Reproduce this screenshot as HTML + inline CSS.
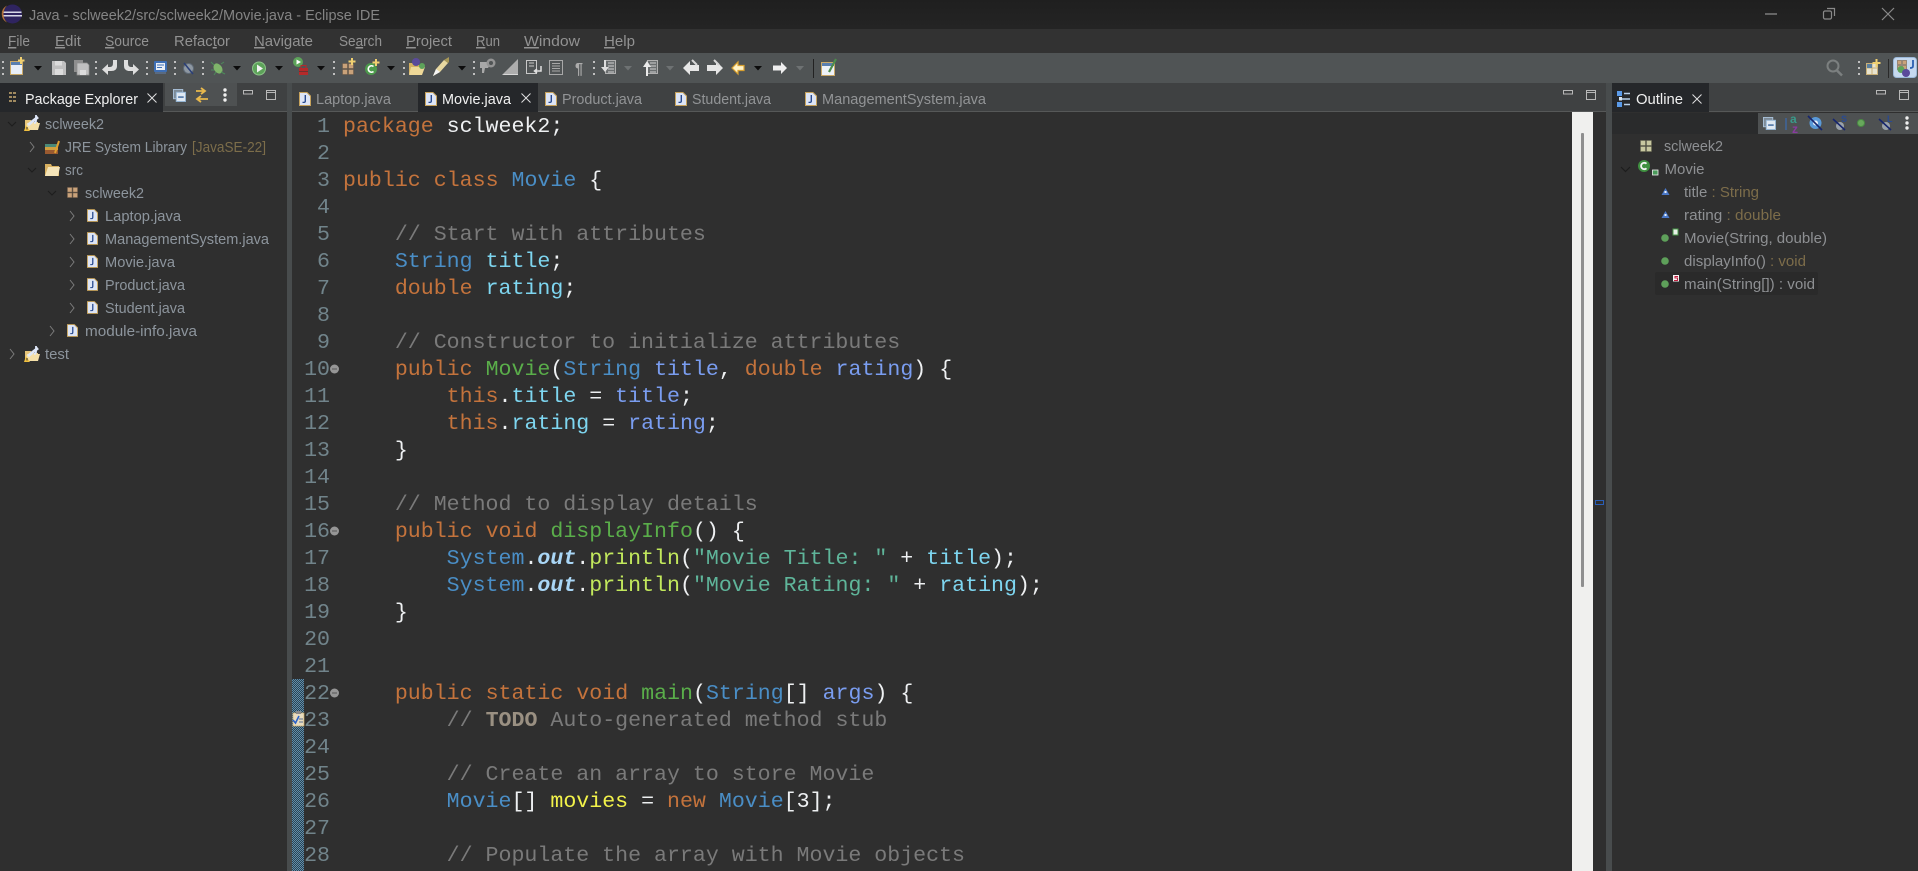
<!DOCTYPE html>
<html><head><meta charset="utf-8"><title>Java - sclweek2/src/sclweek2/Movie.java - Eclipse IDE</title>
<style>
html,body{margin:0;padding:0;width:1918px;height:871px;overflow:hidden;background:#2f2f2f}
svg{position:absolute;left:0;top:0}
svg text{font-family:"Liberation Sans",sans-serif;font-size:15px}
pre{position:absolute;margin:0;font-family:"Liberation Mono",monospace;font-size:21.6px;line-height:27px;color:#eee}
#nums{left:300px;top:114px;width:30px;text-align:right;color:#71848b}
#code{left:343px;top:114px;color:#eef0f2}
.k{color:#c4733c}.c{color:#7a7a7a}.t{color:#4a8ec6}.f{color:#7ed6f0}.p{color:#7a9df0}.m{color:#5aae4a}.l{color:#c2e85c}.s{color:#5fb59a}.o{color:#a9d6f6;font-weight:bold;font-style:italic}.d{color:#9a9082;font-weight:bold}.y{color:#f2f24a}
</style></head><body>
<svg width="1918" height="871" viewBox="0 0 1918 871" xmlns="http://www.w3.org/2000/svg">
<defs>
<pattern id="dots" width="2" height="2" patternUnits="userSpaceOnUse"><rect width="2" height="2" fill="#2c4252"/><rect width="1" height="1" fill="#5f8eab"/><rect x="1" y="1" width="1" height="1" fill="#5f8eab"/></pattern>
<linearGradient id="tb" x1="0" y1="0" x2="0" y2="1"><stop offset="0" stop-color="#1f1f1f"/><stop offset="1" stop-color="#242424"/></linearGradient>
<symbol id="file" viewBox="0 0 12 14" overflow="visible"><path d="M.5.5H8L11.500 4V13.500H.5Z" fill="#dde5f6" stroke="#c6a25c"/><path d="M7 3V9Q7 11 5 11H3.500V9.800H5Q5.600 9.800 5.600 9V3Z" fill="#27498f"/></symbol>
<symbol id="proj" viewBox="0 0 17 18" overflow="visible"><path d="M1 6H7L8 8H14V16H1Z" fill="#e6c478"/><path d="M3 9H16L14 16H1Z" fill="#f4dfa8"/><path d="M4 11L14 3" stroke="#dfe6f5" stroke-width="3"/><path d="M12 1V7Q12 9 10 9" stroke="#dfe8fa" stroke-width="1.800" fill="none"/><path d="M2 11L6 17H0Z" fill="#f0c040"/><rect x="2.500" y="13" width="1" height="2.500" fill="#333"/></symbol>
<symbol id="pkg" viewBox="0 0 12 12" overflow="visible"><g fill="#c9a27a" stroke="#6d5a48" stroke-width=".6"><rect x=".5" y=".5" width="5" height="5"/><rect x="6.500" y=".5" width="5" height="5"/><rect x=".5" y="6.500" width="5" height="5"/><rect x="6.500" y="6.500" width="5" height="5"/></g></symbol>
<symbol id="grip" viewBox="0 0 2 14" overflow="visible"><g fill="#c0c0c0"><rect width="2" height="2"/><rect y="6" width="2" height="2"/><rect y="12" width="2" height="2"/></g></symbol>
<symbol id="dots3" viewBox="0 0 4 14" overflow="visible"><g fill="#f0f0f0"><circle cx="2" cy="2" r="1.700"/><circle cx="2" cy="7" r="1.700"/><circle cx="2" cy="12" r="1.700"/></g></symbol>
<symbol id="collapse" viewBox="0 0 14 14" overflow="visible"><rect x=".5" y=".5" width="10" height="10" fill="#7d8a96" stroke="#a8c0d8"/><rect x="3.500" y="3.500" width="10" height="10" fill="#dfe8f2" stroke="#8fb0d0"/><rect x="5.500" y="8" width="6" height="1.400" fill="#2b5a94"/></symbol>
<symbol id="crossball" viewBox="0 0 14 14" overflow="visible"><circle cx="8" cy="9" r="4" fill="#9aa2aa"/><path d="M1 2L13 13" stroke="#15256e" stroke-width="1.600"/></symbol>
</defs>

<!-- base -->
<rect width="1918" height="871" fill="#2f2f2f"/>
<rect width="1918" height="29" fill="url(#tb)"/>
<rect y="29" width="1918" height="24" fill="#323232"/>
<rect y="53" width="1918" height="30" fill="#505455"/>
<!-- sashes -->
<rect x="287" y="83" width="5" height="788" fill="#484c4d"/>
<rect x="1606" y="83" width="6" height="788" fill="#484c4d"/>
<!-- tab strips -->
<rect y="83" width="287" height="29" fill="#3f4142"/>
<rect x="292" y="83" width="1314" height="29" fill="#3f4142"/>
<rect x="1612" y="83" width="306" height="29" fill="#3f4142"/>
<rect y="111" width="287" height="1" fill="#565858"/>
<rect x="292" y="111" width="1314" height="1" fill="#565858"/>
<rect x="1612" y="111" width="306" height="1" fill="#565858"/>
<rect y="83" width="163" height="29" fill="#25272a"/>
<rect x="165" y="83" width="72" height="23" fill="#4e5152"/>
<rect x="418" y="83" width="120" height="29" fill="#25272a"/>
<rect x="1612" y="83" width="97" height="29" fill="#25272a"/>
<rect x="1612" y="113" width="146" height="21" fill="#2a2b2c"/>
<rect x="1758" y="113" width="160" height="21" fill="#4e5152"/>
<!-- editor scrollbar -->
<rect x="1572" y="112" width="21" height="759" fill="#f0f0ee"/>
<rect x="1581" y="133" width="3" height="454" rx="1" fill="#8f8f8f"/>
<rect x="1595.500" y="500.500" width="8" height="4" fill="none" stroke="#2a5fb8"/>
<!-- change marker -->
<rect x="292" y="679" width="12" height="192" fill="url(#dots)"/>

<!-- title bar -->
<circle cx="12.500" cy="14" r="9.500" fill="#2f2460"/>
<path d="M3.500 11.500H21.500V13H3.500ZM3 15H22V16.500H3Z" fill="#d8d8e8"/>
<path d="M7 5.500A9.500 9.500 0 0 0 7 22.500A12 12 0 0 1 7 5.500Z" fill="#b0703a"/>
<text x="29" y="20" fill="#848484" textLength="351" lengthAdjust="spacingAndGlyphs">Java - sclweek2/src/sclweek2/Movie.java - Eclipse IDE</text>
<path d="M1765 14H1777" stroke="#8a8a8a" stroke-width="1.300"/>
<path d="M1827 8.500H1834.500V16" fill="none" stroke="#8a8a8a" stroke-width="1.200"/><rect x="1823.500" y="11" width="8" height="8" rx="1.500" fill="none" stroke="#8a8a8a" stroke-width="1.200"/>
<path d="M1882 8L1894 20M1894 8L1882 20" stroke="#8a8a8a" stroke-width="1.200"/>

<!-- menu -->
<g fill="#929292">
<text x="8" y="46" textLength="22" lengthAdjust="spacingAndGlyphs"><tspan style="text-decoration:underline">F</tspan>ile</text>
<text x="55" y="46" textLength="26" lengthAdjust="spacingAndGlyphs"><tspan style="text-decoration:underline">E</tspan>dit</text>
<text x="105" y="46" textLength="44" lengthAdjust="spacingAndGlyphs"><tspan style="text-decoration:underline">S</tspan>ource</text>
<text x="174" y="46" textLength="56" lengthAdjust="spacingAndGlyphs">Refac<tspan style="text-decoration:underline">t</tspan>or</text>
<text x="254" y="46" textLength="59" lengthAdjust="spacingAndGlyphs"><tspan style="text-decoration:underline">N</tspan>avigate</text>
<text x="339" y="46" textLength="43" lengthAdjust="spacingAndGlyphs">Se<tspan style="text-decoration:underline">a</tspan>rch</text>
<text x="406" y="46" textLength="46" lengthAdjust="spacingAndGlyphs"><tspan style="text-decoration:underline">P</tspan>roject</text>
<text x="476" y="46" textLength="24" lengthAdjust="spacingAndGlyphs"><tspan style="text-decoration:underline">R</tspan>un</text>
<text x="524" y="46" textLength="56" lengthAdjust="spacingAndGlyphs"><tspan style="text-decoration:underline">W</tspan>indow</text>
<text x="604" y="46" textLength="31" lengthAdjust="spacingAndGlyphs"><tspan style="text-decoration:underline">H</tspan>elp</text>
</g>

<!-- toolbar grips -->
<use href="#grip" x="2" y="61" width="2" height="14"/><use href="#grip" x="95" y="61" width="2" height="14"/><use href="#grip" x="146" y="61" width="2" height="14"/><use href="#grip" x="174" y="61" width="2" height="14"/><use href="#grip" x="202" y="61" width="2" height="14"/><use href="#grip" x="333" y="61" width="2" height="14"/><use href="#grip" x="403" y="61" width="2" height="14"/><use href="#grip" x="473" y="61" width="2" height="14"/><use href="#grip" x="593" y="61" width="2" height="14"/>
<rect x="813" y="59" width="1" height="19" fill="#222"/>
<!-- dropdown arrows -->
<g fill="#0c0c0c"><path d="M34 66H42L38 70.500Z"/><path d="M233 66H241L237 70.500Z"/><path d="M275 66H283L279 70.500Z"/><path d="M317 66H325L321 70.500Z"/><path d="M387 66H395L391 70.500Z"/><path d="M458 66H466L462 70.500Z"/><path d="M754 66H762L758 70.500Z"/></g>
<g fill="#6e7273"><path d="M624 66H632L628 70.500Z"/><path d="M666 66H674L670 70.500Z"/><path d="M796 66H804L800 70.500Z"/></g>
<!-- new -->
<rect x="10.500" y="61.500" width="12" height="13" fill="#e8eef8" stroke="#c9a868"/><rect x="11" y="62" width="11" height="3" fill="#5a7fb0"/><path d="M21 57V64M18 60.500H24.500" stroke="#f0d070" stroke-width="2"/>
<!-- save -->
<path d="M52 61H64L66 63V75H52Z" fill="#c0c0c0"/><rect x="55" y="61" width="7" height="4.500" fill="#dcdcdc"/><rect x="55" y="69" width="8" height="6" fill="#dcdcdc"/>
<path d="M74 60H83V72H74Z" fill="#8e8e8e"/><path d="M77 63H87L89 65V75H77Z" fill="#c0c0c0" stroke="#8e8e8e" stroke-width=".7"/><rect x="80" y="70" width="6" height="5" fill="#dcdcdc"/>
<!-- undo/redo arrows -->
<path d="M117 60V66Q117 71 111 71H108V75L102 69.500L108 64V67H110Q113 67 113 63V60Z" fill="#dedede"/>
<path d="M124 60V66Q124 71 130 71H133V75L139 69.500L133 64V67H131Q128 67 128 63V60Z" fill="#dedede"/>
<!-- blue -->
<rect x="154" y="61" width="13" height="11" rx="1" fill="#3e6fb5"/><rect x="156" y="63" width="9" height="7" fill="#e8eef6"/><path d="M157 65H164M157 67.500H162" stroke="#3e6fb5"/><rect x="155" y="72" width="11" height="2" fill="#5a6a80"/>
<!-- skip bp -->
<circle cx="188.500" cy="68.500" r="5" fill="#8e98a2" stroke="#5f6a76"/><path d="M184 63L193 74" stroke="#2a3f78" stroke-width="1.500"/>
<!-- bug -->
<ellipse cx="218" cy="68.500" rx="4" ry="5.500" fill="#7fb56a" transform="rotate(-35 218 68.500)"/><path d="M211 62L214 65M211 70H214M214 75L216 72M224 62L221 64M225 74L221 72" stroke="#4d8a5a" stroke-width="1"/>
<!-- run -->
<circle cx="259" cy="68.500" r="6.500" fill="#5da35a"/><circle cx="259" cy="68.500" r="6.500" fill="none" stroke="#8cc488"/><path d="M257 64.500L263 68.500L257 72.500Z" fill="#f2f2f2"/>
<!-- ext tools -->
<circle cx="298" cy="62" r="5" fill="#5da35a"/><path d="M296.500 59.500L301 62L296.500 64.500Z" fill="#fff"/>
<rect x="299" y="68" width="9" height="7" fill="#b52a2a"/><rect x="301" y="65.500" width="5" height="3" fill="none" stroke="#b52a2a"/><rect x="299" y="71" width="9" height="1" fill="#703030"/>
<!-- new pkg -->
<use href="#pkg" x="342" y="63" width="12" height="12"/><path d="M352 58V65M348.500 61.500H355.500" stroke="#f0d070" stroke-width="2"/>
<!-- new class -->
<circle cx="371" cy="69" r="6" fill="#4c9a4c"/><path d="M373.500 66.500A3.200 3.200 0 1 0 373.500 71.500" fill="none" stroke="#fff" stroke-width="1.700"/><path d="M376 59V66M372.500 62.500H379.500" stroke="#f0d070" stroke-width="2"/>
<!-- open type -->
<path d="M409 63H415L416 65H422V74H409Z" fill="#d4b060"/><path d="M411 67H425L422 75H409Z" fill="#eed898"/><circle cx="416" cy="62" r="4" fill="#5a4a9a"/><circle cx="422" cy="66" r="3" fill="#5da35a"/>
<!-- pencil -->
<path d="M433 76L436 69L444 60L448 63L440 72Z" fill="#e8d8a0"/><path d="M444 60L449 57V62L448 63Z" fill="#a89858"/><path d="M433 76L436 69L440 72Z" fill="#f4f4f4"/>
<!-- gray tools -->
<path d="M480 62H487L490 65L488 68H485L484 73H482L482 68H480Z" fill="#a8a8a8"/><circle cx="491" cy="63" r="4.500" fill="#949494"/><circle cx="491" cy="63" r="2" fill="#505455"/>
<path d="M502 75L518 59V74Z" fill="#adadad"/><path d="M502 75H518V74H504Z" fill="#d8d8d8"/>
<rect x="526.500" y="60.500" width="10" height="13" fill="none" stroke="#c8c8c8"/><path d="M529 63H534M529 66H534" stroke="#c8c8c8"/><path d="M541 66V71H535M537 69L534.500 71L537 73" fill="none" stroke="#e0e0e0" stroke-width="1.500"/>
<rect x="549.500" y="60.500" width="13" height="14" fill="none" stroke="#a8a8a8"/><path d="M552 63.500H560M552 66H560M552 68.500H560M552 71H560" stroke="#a8a8a8"/>
<text x="575" y="74" fill="#acacac" style="font-size:16px;font-weight:bold" textLength="8" lengthAdjust="spacingAndGlyphs">¶</text>
<rect x="605.500" y="60.500" width="10" height="13" fill="#6a6e6f" stroke="#b0b0b0"/><path d="M608 63H614M608 66H614M608 69H614M608 72H614" stroke="#d0d0d0"/><path d="M604 60V67H601L605 72L609 67H606V60Z" fill="#dedede"/>
<rect x="647.500" y="60.500" width="10" height="13" fill="#6a6e6f" stroke="#b0b0b0"/><path d="M650 63H656M650 66H656M650 69H656M650 72H656" stroke="#d0d0d0"/><path d="M648 76V67H651L647 61L643 67H646V76Z" fill="#eaeaea"/>
<!-- nav arrows -->
<path d="M699 65H690V61L683 68L690 75V71H699Z" fill="#e6e6e6"/><path d="M692 60L697 65" stroke="#d6d6d6" stroke-width="2"/>
<path d="M707 65H716V61L723 68L716 75V71H707Z" fill="#e6e6e6"/><path d="M714 60L719 65" stroke="#d6d6d6" stroke-width="2"/>
<path d="M744 65.500H738V62L732 68L738 74V70.500H744Z" fill="#fff3c8" stroke="#d8a030" stroke-width="1.200"/>
<path d="M773 65.500H781V62L787 68L781 74V70.500H773Z" fill="#eeeeee"/>
<!-- last -->
<rect x="821.500" y="62.500" width="13" height="13" fill="#eef2f8" stroke="#c9a868"/><rect x="822" y="63" width="12" height="3" fill="#5a7fb0"/><path d="M829 72L836 59" stroke="#4c8c4c" stroke-width="2.200"/>
<!-- right toolbar -->
<circle cx="1833" cy="66" r="5.500" fill="none" stroke="#7c8080" stroke-width="2"/><path d="M1837 70.500L1842 75.500" stroke="#7c8080" stroke-width="2.500"/>
<use href="#grip" x="1858" y="61" width="2" height="14"/>
<rect x="1866.500" y="63.500" width="11" height="11" fill="#e8e4d0" stroke="#c9b078"/><path d="M1872 63.500V74.500M1866.500 68H1877.500" stroke="#c9b078"/><rect x="1867" y="64" width="5" height="4" fill="#5a7fa0"/><path d="M1876.500 59V67M1872.500 63H1880.500" stroke="#f0d070" stroke-width="2"/>
<rect x="1888" y="59" width="1" height="19" fill="#2a2a2a"/>
<rect x="1893.500" y="57.500" width="23" height="20" rx="3" fill="#c6d9ef" stroke="#9bb8d8"/>
<use href="#pkg" x="1897" y="60" width="10" height="10"/><circle cx="1901" cy="69.500" r="3.500" fill="#5da35a"/><circle cx="1906" cy="73" r="4" fill="#5a4a9a"/><path d="M1913 60V66Q1913 68 1910 68" fill="none" stroke="#2a5fb0" stroke-width="1.800"/>

<!-- view controls -->
<g fill="none" stroke="#b8b8b8">
<rect x="243.500" y="90.500" width="9" height="3.500"/><rect x="266.500" y="90.500" width="9" height="9"/><path d="M266.500 92.500H275.500"/>
<rect x="1563.500" y="90.500" width="9" height="3.500"/><rect x="1586.500" y="90.500" width="9" height="9"/><path d="M1586.500 92.500H1595.500"/>
<rect x="1876.500" y="90.500" width="9" height="3.500"/><rect x="1899.500" y="90.500" width="9" height="9"/><path d="M1899.500 92.500H1908.500"/>
</g>

<!-- package explorer tab -->
<g fill="#a08a60"><rect x="9" y="92" width="3" height="2"/><rect x="9" y="96" width="3" height="2"/><rect x="9" y="100" width="3" height="2"/><rect x="13" y="92" width="3" height="2"/><rect x="13" y="96" width="3" height="2"/><rect x="13" y="100" width="3" height="2"/></g>
<text x="25" y="104" fill="#f0f0f0" textLength="113" lengthAdjust="spacingAndGlyphs">Package Explorer</text>
<path d="M147.500 93.500L156.500 102.500M156.500 93.500L147.500 102.500" stroke="#e0e0e0"/>
<use href="#collapse" x="173" y="89" width="13" height="13"/>
<path d="M196 91H204M201 88L205 91L201 94M208 99H198M201 96L197 99L201 102" fill="none" stroke="#e8b84c" stroke-width="1.800"/>
<use href="#dots3" x="223" y="88" width="4" height="14"/>

<!-- editor tabs -->
<use href="#file" x="299" y="92" width="12" height="14"/>
<text x="316" y="104" fill="#929496" textLength="75" lengthAdjust="spacingAndGlyphs">Laptop.java</text>
<use href="#file" x="425" y="92" width="12" height="14"/>
<text x="442" y="104" fill="#f2f2f2" textLength="69" lengthAdjust="spacingAndGlyphs">Movie.java</text>
<path d="M521.500 93.500L530.500 102.500M530.500 93.500L521.500 102.500" stroke="#e0e0e0"/>
<use href="#file" x="545" y="92" width="12" height="14"/>
<text x="562" y="104" fill="#929496" textLength="80" lengthAdjust="spacingAndGlyphs">Product.java</text>
<use href="#file" x="675" y="92" width="12" height="14"/>
<text x="692" y="104" fill="#929496" textLength="79" lengthAdjust="spacingAndGlyphs">Student.java</text>
<use href="#file" x="805" y="92" width="12" height="14"/>
<text x="822" y="104" fill="#929496" textLength="164" lengthAdjust="spacingAndGlyphs">ManagementSystem.java</text>

<!-- outline tab -->
<g fill="#5a9ae8"><rect x="1617" y="91" width="5" height="5"/><rect x="1617" y="102" width="5" height="5"/></g>
<path d="M1624 93.500H1630M1622 99H1630M1624 104.500H1630" stroke="#b8d0ea" stroke-width="1.500"/>
<rect x="1619" y="97" width="3" height="3.500" fill="#d8e4f2"/>
<text x="1636" y="104" fill="#f0f0f0" textLength="47" lengthAdjust="spacingAndGlyphs">Outline</text>
<path d="M1692.500 94.500L1701.500 103.500M1701.500 94.500L1692.500 103.500" stroke="#e0e0e0"/>
<!-- outline toolbar -->
<use href="#collapse" x="1763" y="117" width="13" height="13"/>
<path d="M1786 118V130" stroke="#3a6ab0" stroke-width="1.200"/>
<text x="1790" y="123" fill="#3a9a8a" style="font-size:12px;font-weight:bold">a</text>
<text x="1792" y="133" fill="#8a3aa0" style="font-size:12px;font-weight:bold">z</text>
<circle cx="1815.500" cy="123" r="6" fill="#5a9ad8"/><circle cx="1815.500" cy="123" r="2.500" fill="#e8f0f8"/><path d="M1808 116L1822 130" stroke="#15256e" stroke-width="1.600"/>
<use href="#crossball" x="1832" y="117" width="14" height="14"/><text x="1841" y="122" fill="#2a4a90" style="font-size:9px;font-weight:bold">S</text>
<circle cx="1861" cy="123" r="3.500" fill="#68a85c"/><circle cx="1861" cy="123" r="3.500" fill="none" stroke="#4a8a44"/>
<use href="#crossball" x="1878" y="117" width="14" height="14"/><text x="1887" y="122" fill="#2a4a90" style="font-size:9px;font-weight:bold">L</text>
<use href="#dots3" x="1905" y="116" width="4" height="14"/>

<!-- package explorer tree -->
<g fill="none" stroke-width="1">
<path d="M8 122L12 126L16 122" stroke="#1d1d1d"/>
<path d="M30 142L34 147L30 152" stroke="#7c7c7c"/>
<path d="M28 168L32 172L36 168" stroke="#1d1d1d"/>
<path d="M48 191L52 195L56 191" stroke="#1d1d1d"/>
<path d="M70 211L74 216L70 221" stroke="#7c7c7c"/>
<path d="M70 234L74 239L70 244" stroke="#7c7c7c"/>
<path d="M70 257L74 262L70 267" stroke="#7c7c7c"/>
<path d="M70 280L74 285L70 290" stroke="#7c7c7c"/>
<path d="M70 303L74 308L70 313" stroke="#7c7c7c"/>
<path d="M50 326L54 331L50 336" stroke="#7c7c7c"/>
<path d="M10 349L14 354L10 359" stroke="#7c7c7c"/>
</g>
<use href="#proj" x="24" y="114" width="17" height="18"/>
<use href="#proj" x="24" y="345" width="17" height="18"/>
<rect x="45" y="147" width="13" height="3" fill="#d0a040"/><rect x="45" y="144" width="13" height="3" fill="#4a8a78"/><rect x="45" y="150" width="13" height="4" fill="#9a5a30"/><path d="M55 153L59 141" stroke="#e0a030" stroke-width="2"/>
<path d="M45 164H51L52 166H59V176H45Z" fill="#d8b060"/><path d="M48 167H60L58 176H45Z" fill="#f4e4b8"/>
<use href="#pkg" x="67" y="187" width="11" height="11"/>
<use href="#file" x="87" y="209" width="11" height="13"/>
<use href="#file" x="87" y="232" width="11" height="13"/>
<use href="#file" x="87" y="255" width="11" height="13"/>
<use href="#file" x="87" y="278" width="11" height="13"/>
<use href="#file" x="87" y="301" width="11" height="13"/>
<use href="#file" x="67" y="324" width="11" height="13"/>
<g fill="#8d959d">
<text x="45" y="129" textLength="59" lengthAdjust="spacingAndGlyphs">sclweek2</text>
<text x="65" y="152" textLength="122" lengthAdjust="spacingAndGlyphs">JRE System Library</text>
<text x="192" y="152" fill="#7c6d4a" textLength="74" lengthAdjust="spacingAndGlyphs">[JavaSE-22]</text>
<text x="65" y="175" textLength="18" lengthAdjust="spacingAndGlyphs">src</text>
<text x="85" y="198" textLength="59" lengthAdjust="spacingAndGlyphs">sclweek2</text>
<text x="105" y="221" textLength="76" lengthAdjust="spacingAndGlyphs">Laptop.java</text>
<text x="105" y="244" textLength="164" lengthAdjust="spacingAndGlyphs">ManagementSystem.java</text>
<text x="105" y="267" textLength="70" lengthAdjust="spacingAndGlyphs">Movie.java</text>
<text x="105" y="290" textLength="80" lengthAdjust="spacingAndGlyphs">Product.java</text>
<text x="105" y="313" textLength="80" lengthAdjust="spacingAndGlyphs">Student.java</text>
<text x="85" y="336" textLength="112" lengthAdjust="spacingAndGlyphs">module-info.java</text>
<text x="45" y="359" textLength="24" lengthAdjust="spacingAndGlyphs">test</text>
</g>

<!-- outline tree -->
<rect x="1655" y="272" width="163" height="23" rx="2" fill="#2a2a2a"/>
<g fill="#c8c8a0" stroke="#6e6e58" stroke-width=".6"><rect x="1640.500" y="140.500" width="5" height="5"/><rect x="1646.500" y="140.500" width="5" height="5"/><rect x="1640.500" y="146.500" width="5" height="5"/><rect x="1646.500" y="146.500" width="5" height="5"/></g>
<path d="M1621 167L1625.500 171.500L1630 167" fill="none" stroke="#1d1d1d" stroke-width="1.200"/>
<circle cx="1644" cy="166" r="6" fill="#3f9040"/><path d="M1646.500 163.700A3.200 3.200 0 1 0 1646.500 168.300" fill="none" stroke="#f4f4f4" stroke-width="1.800"/>
<rect x="1652.500" y="170" width="5.500" height="5" fill="#4a9a5a" stroke="#f0f0f0" stroke-width=".8"/>
<path d="M1665.500 188L1669.500 195H1661.500Z" fill="#4a78c8"/><rect x="1664.500" y="191" width="2" height="2" fill="#e8f0f8"/>
<path d="M1665.500 211L1669.500 218H1661.500Z" fill="#4a78c8"/><rect x="1664.500" y="214" width="2" height="2" fill="#e8f0f8"/>
<circle cx="1665" cy="238" r="3.800" fill="#5ea05a"/>
<rect x="1673" y="229" width="5" height="6" fill="#e8f0e8" stroke="#4a9a4a"/>
<circle cx="1665" cy="261" r="3.800" fill="#5ea05a"/>
<circle cx="1665" cy="284" r="3.800" fill="#5ea05a"/>
<rect x="1673" y="275" width="6" height="6.500" fill="#f4f4f4"/><path d="M1678 276.500H1675V278H1677.500V280.500H1674" fill="none" stroke="#c02040" stroke-width="1.100"/>
<g fill="#8e9093">
<text x="1664" y="151" textLength="59" lengthAdjust="spacingAndGlyphs">sclweek2</text>
<text x="1664.500" y="174" textLength="40" lengthAdjust="spacingAndGlyphs">Movie</text>
<text x="1684" y="197" textLength="75" lengthAdjust="spacingAndGlyphs">title<tspan fill="#7d6d4a"> : String</tspan></text>
<text x="1684" y="220" textLength="97" lengthAdjust="spacingAndGlyphs">rating<tspan fill="#7d6d4a"> : double</tspan></text>
<text x="1684" y="243" textLength="143" lengthAdjust="spacingAndGlyphs">Movie(String, double)</text>
<text x="1684" y="266" textLength="122" lengthAdjust="spacingAndGlyphs">displayInfo()<tspan fill="#7d6d4a"> : void</tspan></text>
<text x="1684" y="289" textLength="131" lengthAdjust="spacingAndGlyphs">main(String[]) : void</text>
</g>

<!-- folding + todo markers -->
<g><circle cx="334.500" cy="369" r="4.500" fill="#969696"/><path d="M332 369H337" stroke="#555"/>
<circle cx="334.500" cy="531" r="4.500" fill="#969696"/><path d="M332 531H337" stroke="#555"/>
<circle cx="334.500" cy="693" r="4.500" fill="#969696"/><path d="M332 693H337" stroke="#555"/></g>
<rect x="293" y="713" width="11" height="13" fill="#e8dcc0" stroke="#c8a868" stroke-width=".7"/><rect x="296" y="711" width="5" height="3" fill="#8a8a8a"/><path d="M293 720L295.500 723L299 716" fill="none" stroke="#2a62c8" stroke-width="1.600"/><path d="M299 719H303M299 722H303" stroke="#5a7090"/>
</svg>

<pre id="nums">1
2
3
4
5
6
7
8
9
10
11
12
13
14
15
16
17
18
19
20
21
22
23
24
25
26
27
28</pre>
<pre id="code"><span class="k">package</span> sclweek2;

<span class="k">public</span> <span class="k">class</span> <span class="t">Movie</span> {

    <span class="c">// Start with attributes</span>
    <span class="t">String</span> <span class="f">title</span>;
    <span class="k">double</span> <span class="f">rating</span>;

    <span class="c">// Constructor to initialize attributes</span>
    <span class="k">public</span> <span class="m">Movie</span>(<span class="t">String</span> <span class="p">title</span>, <span class="k">double</span> <span class="p">rating</span>) {
        <span class="k">this</span>.<span class="f">title</span> = <span class="p">title</span>;
        <span class="k">this</span>.<span class="f">rating</span> = <span class="p">rating</span>;
    }

    <span class="c">// Method to display details</span>
    <span class="k">public</span> <span class="k">void</span> <span class="m">displayInfo</span>() {
        <span class="t">System</span>.<span class="o">out</span>.<span class="l">println</span>(<span class="s">"Movie Title: "</span> + <span class="f">title</span>);
        <span class="t">System</span>.<span class="o">out</span>.<span class="l">println</span>(<span class="s">"Movie Rating: "</span> + <span class="f">rating</span>);
    }


    <span class="k">public</span> <span class="k">static</span> <span class="k">void</span> <span class="m">main</span>(<span class="t">String</span>[] <span class="p">args</span>) {
        <span class="c">// <span class="d">TODO</span> Auto-generated method stub</span>

        <span class="c">// Create an array to store Movie</span>
        <span class="t">Movie</span>[] <span class="y">movies</span> = <span class="k">new</span> <span class="t">Movie</span>[3];

        <span class="c">// Populate the array with Movie objects</span></pre>
</body></html>
